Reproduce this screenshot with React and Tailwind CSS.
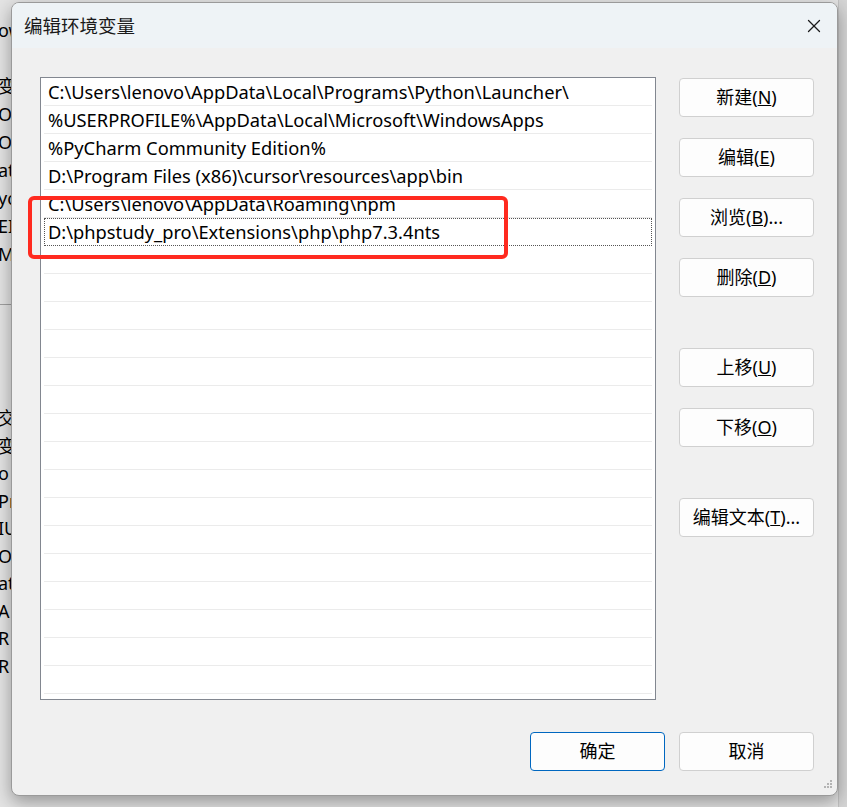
import { X } from 'lucide-react'

const paths = [
  'C:\\Users\\lenovo\\AppData\\Local\\Programs\\Python\\Launcher\\',
  '%USERPROFILE%\\AppData\\Local\\Microsoft\\WindowsApps',
  '%PyCharm Community Edition%',
  'D:\\Program Files (x86)\\cursor\\resources\\app\\bin',
  'C:\\Users\\lenovo\\AppData\\Roaming\\npm',
  'D:\\phpstudy_pro\\Extensions\\php\\php7.3.4nts',
]

const behindTop = ['ow', '', '变量', 'On', 'On', 'at', 'yc', 'EI', 'M']
const behindBottom = ['交', '变量', 'o', 'Pri', 'IU', 'OS', 'at', 'A', 'R', 'R']

function Btn({ children, primary }) {
  return (
    <button
      className={
        primary
          ? 'w-[135px] h-[39px] rounded-[4px] border border-[#0067c0] bg-[#fdfdfd] text-[18px] text-black'
          : 'w-[135px] h-[39px] rounded-[4px] border border-[#d0d0d0] bg-[#fdfdfd] text-[18px] text-black'
      }
    >
      {children}
    </button>
  )
}

export default function App() {
  const rows = Array.from({ length: 23 }, (_, i) => paths[i] || '')

  return (
    <div
      className="relative w-[847px] h-[807px] overflow-hidden bg-[#e4e4e4]"
      style={{ fontFamily: '"Noto Sans", "Noto Sans CJK SC", sans-serif' }}
    >
      {/* window behind the dialog */}
      <div className="flex flex-col text-[18px] text-black leading-[28px] pt-[16px]">
        {behindTop.map((t, i) => (
          <div key={i} className="h-[28px] -ml-[2px]">{t}</div>
        ))}
        <div className="h-[36px]" />
        <div className="border-t border-[#a0a0a0] h-[100px]" />
        {behindBottom.map((t, i) => (
          <div key={'b' + i} className="h-[27.5px] -ml-[2px]">{t}</div>
        ))}
      </div>
      <div className="absolute right-0 top-0 w-[9px] h-full bg-[#d6d6d6] border-l border-[#c4c4c4]" />

      {/* dialog */}
      <div className="absolute left-[11px] top-[2px] w-[827px] h-[794px] rounded-[8px] bg-[#f0f0f0] border border-[#9a9a9a] shadow-[0_6px_18px_rgba(0,0,0,0.35)] overflow-hidden">
        <div className="h-[45px] bg-[#eef3f6] flex items-center justify-between pl-[12px] pr-[10px]">
          <span className="text-[18.5px] text-[#1a1a1a]">编辑环境变量</span>
          <X size={22} strokeWidth={1.4} className="text-[#1a1a1a] mr-[2px]" />
        </div>

        <div className="pl-[28px] pt-[29px] pr-[23px]">
          <div className="flex gap-[23px]">
            <div className="relative w-[616px] h-[623px] bg-white border border-[#828790] overflow-hidden">
              {rows.map((p, i) => (
                <div
                  key={i}
                  className={
                    i === 5
                      ? 'h-[28px] mx-[3px] px-[3px] flex items-center border border-dotted border-[#555] text-[18.3px] text-black whitespace-nowrap'
                      : 'h-[28px] mx-[3px] px-[4px] flex items-center border-b border-[#ebebeb] text-[18.3px] text-black whitespace-nowrap'
                  }
                >
                  {p}
                </div>
              ))}
            </div>

            <div className="flex flex-col pt-[1px]">
              <div className="flex flex-col gap-[21px]">
                <Btn>新建(<u>N</u>)</Btn>
                <Btn>编辑(<u>E</u>)</Btn>
                <Btn>浏览(<u>B</u>)...</Btn>
                <Btn>删除(<u>D</u>)</Btn>
              </div>
              <div className="flex flex-col gap-[21px] mt-[51px]">
                <Btn>上移(<u>U</u>)</Btn>
                <Btn>下移(<u>O</u>)</Btn>
              </div>
              <div className="mt-[51px]">
                <Btn>编辑文本(<u>T</u>)...</Btn>
              </div>
            </div>
          </div>

          <div className="flex justify-end gap-[14px] mt-[32px]">
            <Btn primary>确定</Btn>
            <Btn>取消</Btn>
          </div>
        </div>

        {/* resize grip */}
        <svg className="absolute right-[4px] bottom-[4px]" width="12" height="12" viewBox="0 0 12 12">
          <rect x="9" y="1" width="2" height="2" fill="#b4b4b4" />
          <rect x="6" y="4" width="2" height="2" fill="#b4b4b4" />
          <rect x="9" y="4" width="2" height="2" fill="#b4b4b4" />
          <rect x="3" y="7" width="2" height="2" fill="#b4b4b4" />
          <rect x="6" y="7" width="2" height="2" fill="#b4b4b4" />
          <rect x="9" y="7" width="2" height="2" fill="#b4b4b4" />
        </svg>
      </div>

      {/* red highlight box */}
      <div className="absolute left-[28px] top-[196px] w-[480px] h-[63px] border-[4px] border-[#ff2a1f] rounded-[6px]" />
    </div>
  )
}
